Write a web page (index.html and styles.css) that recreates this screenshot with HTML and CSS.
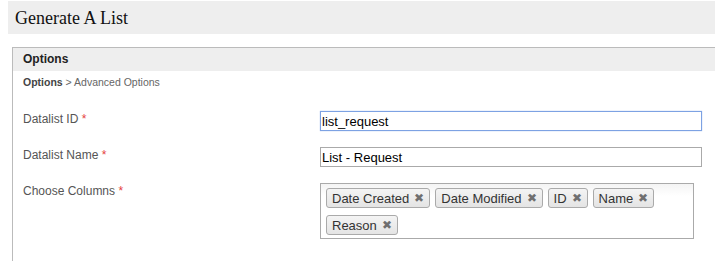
FILE: index.html
```html
<!DOCTYPE html>
<html lang="en">
<head>
    <meta charset="UTF-8">
    <title>Generate A List</title>
    <link rel="stylesheet" href="styles.css">
</head>
<body>
    <div class="page">
        <div class="page-header">
            <h1>Generate A List</h1>
        </div>

        <div class="panel">
            <div class="panel-header">Options</div>
            <div class="breadcrumb"><b>Options</b> &gt; Advanced Options</div>

            <div class="form-row">
                <label>Datalist ID <span class="req">*</span></label>
                <input type="text" class="text-input focused" value="list_request">
            </div>

            <div class="form-row">
                <label>Datalist Name <span class="req">*</span></label>
                <input type="text" class="text-input" value="List - Request">
            </div>

            <div class="form-row">
                <label>Choose Columns <span class="req">*</span></label>
                <div class="chosen-box">
                    <span class="chip">Date Created <span class="chip-x">&#x2716;</span></span>
                    <span class="chip">Date Modified <span class="chip-x">&#x2716;</span></span>
                    <span class="chip">ID <span class="chip-x">&#x2716;</span></span>
                    <span class="chip">Name <span class="chip-x">&#x2716;</span></span>
                    <span class="chip">Reason <span class="chip-x">&#x2716;</span></span>
                </div>
            </div>
        </div>
    </div>
</body>
</html>
```

FILE: styles.css
```css
* {
    box-sizing: border-box;
}

body {
    margin: 0;
    overflow: hidden;
    background: #fff;
    font-family: "Liberation Sans", Arial, sans-serif;
}

.page {
    padding: 1px 0 0 8px;
}

.page-header {
    background: #eeeeee;
    height: 33px;
    padding: 6px 7px 0;
}

.page-header h1 {
    margin: 0;
    font-family: "Liberation Serif", "Times New Roman", Tinos, serif;
    font-weight: normal;
    font-size: 18px;
    line-height: 22px;
    color: #111;
}

.panel {
    margin: 13px -30px 0 4px;
    border: 1px solid #bbbbbb;
    border-bottom: none;
    height: 214px;
}

.panel-header {
    background: #eeeeee;
    height: 23px;
    line-height: 23px;
    padding-left: 10px;
    font-size: 12px;
    font-weight: bold;
    color: #222;
}

.breadcrumb {
    padding: 5px 10px 0;
    font-size: 10.5px;
    color: #666;
    height: 40px;
}

.breadcrumb b {
    color: #444;
}

.form-row {
    display: flex;
    align-items: flex-start;
    margin-bottom: 16px;
    padding-left: 10px;
}

.form-row label {
    width: 297px;
    font-size: 12px;
    color: #555;
    padding-top: 1px;
}

.req {
    color: #e53e3e;
}

.text-input {
    width: 382px;
    height: 20px;
    margin: 0;
    border: 1px solid #aaaaaa;
    padding: 0 1px;
    font-family: "Liberation Sans", Arial, sans-serif;
    font-size: 13px;
    color: #000;
    outline: none;
}

.text-input.focused {
    border-color: #7da2e3;
    box-shadow: 0 0 1px #9bb8ee;
}

.chosen-box {
    width: 374px;
    border: 1px solid #aaaaaa;
    padding: 4px 5px 3px 5px;
    display: flex;
    flex-wrap: wrap;
    gap: 7px 5px;
    background: linear-gradient(#f4f4f4, #fff 12px);
}

.chip {
    display: inline-flex;
    align-items: center;
    height: 20px;
    padding: 0 5px;
    border: 1px solid #aaaaaa;
    border-radius: 3px;
    background: linear-gradient(#f4f4f4, #e4e4e4);
    font-size: 13px;
    color: #333;
}

.chip-x {
    margin-left: 5px;
    font-size: 12px;
    color: #6f6f6f;
}
```
